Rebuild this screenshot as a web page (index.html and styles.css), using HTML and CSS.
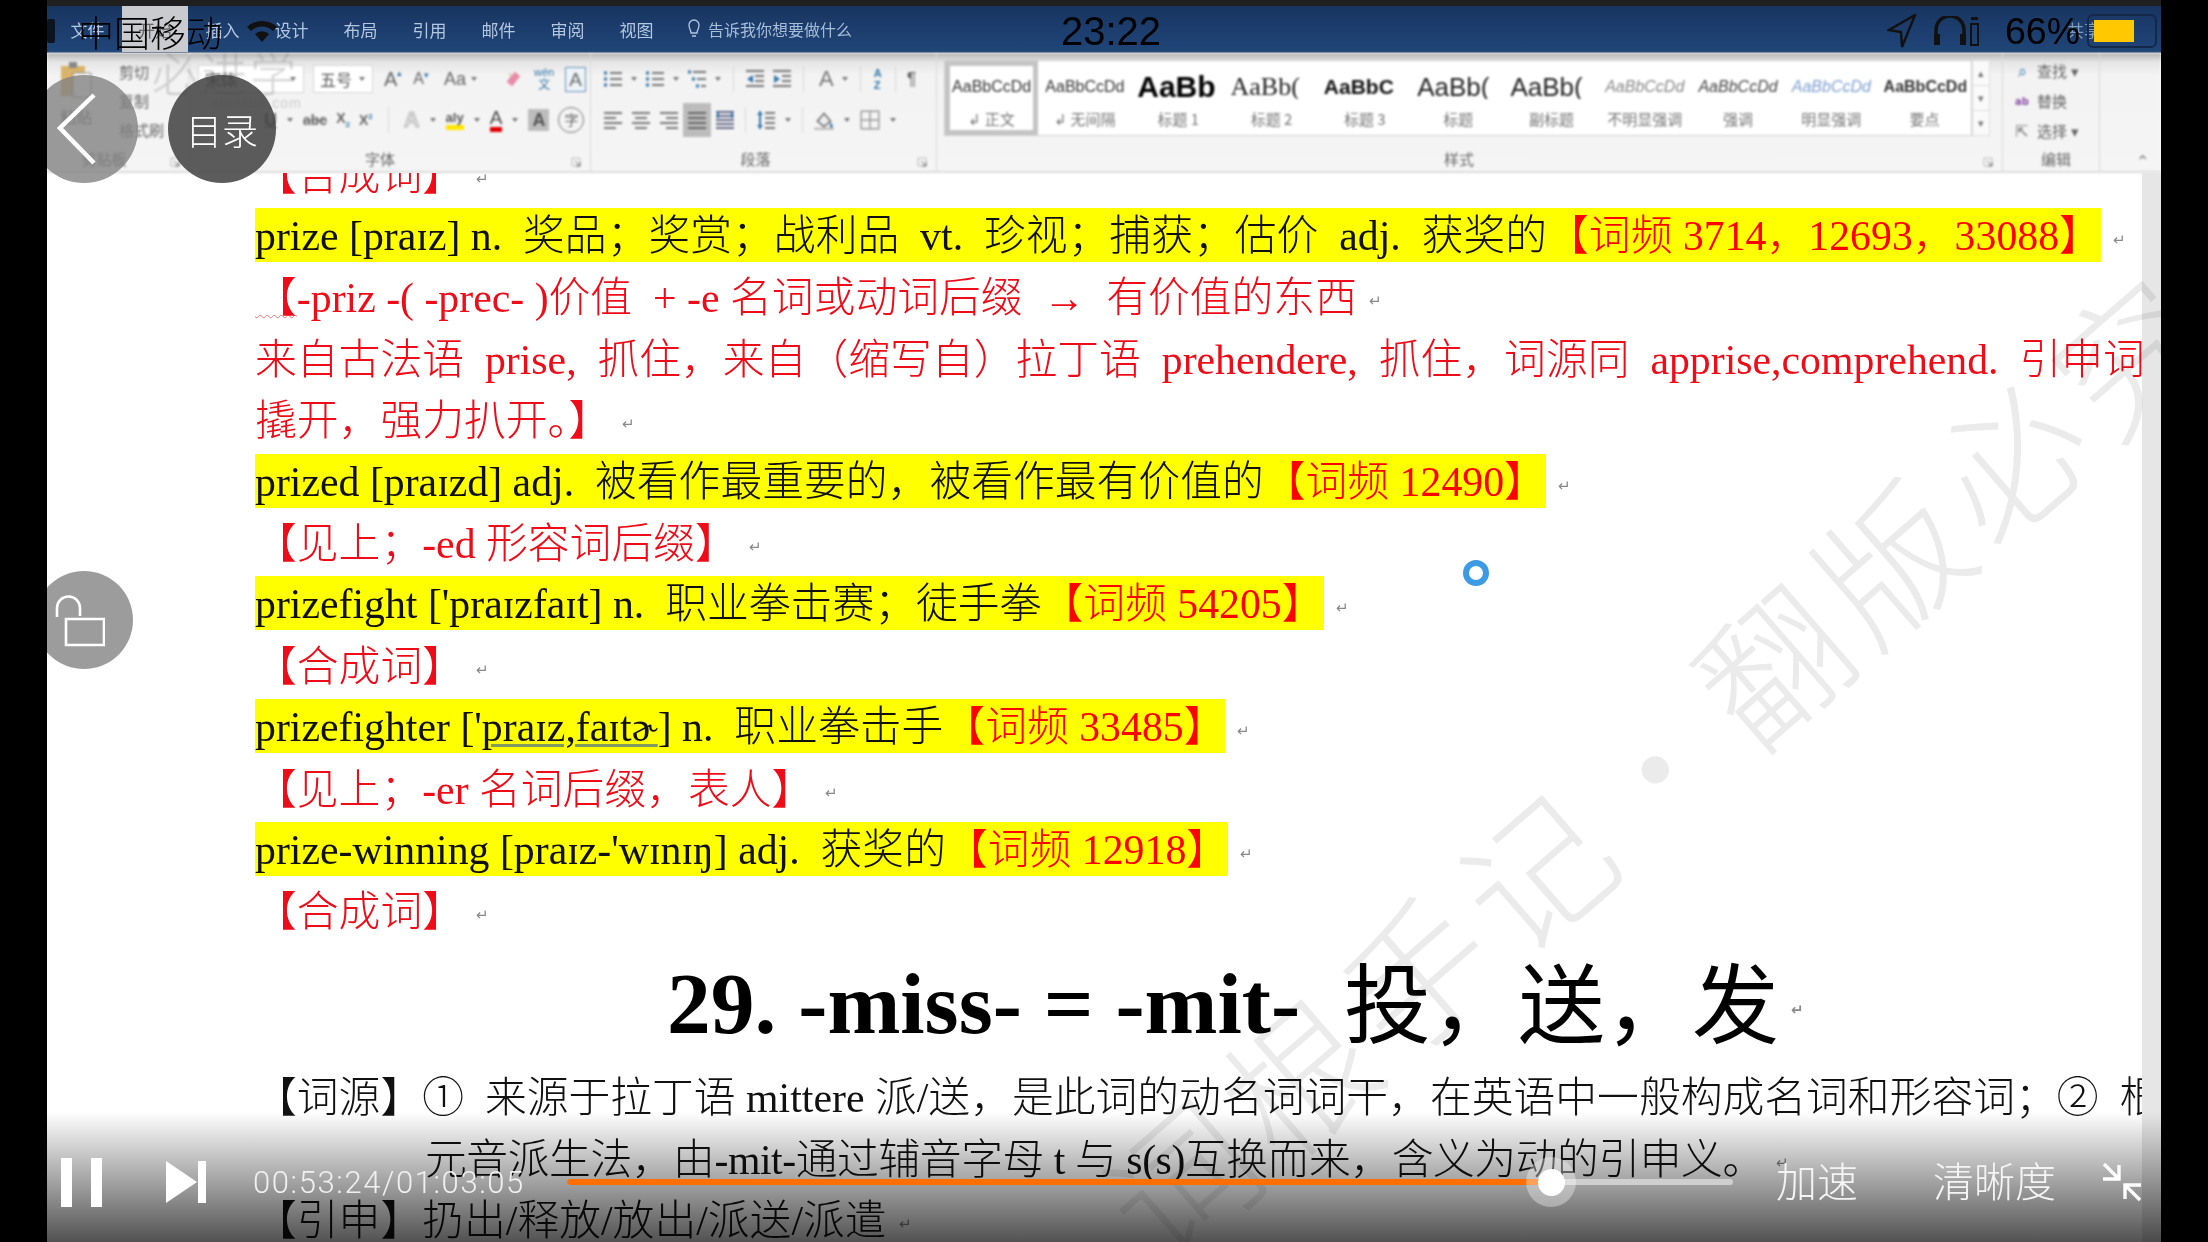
FILE: index.html
```html
<!DOCTYPE html>
<html lang="zh-CN">
<head>
<meta charset="utf-8">
<title>词根手记</title>
<link rel="stylesheet" href="styles.css">
</head>
<body>
<svg class="defs" width="0" height="0" aria-hidden="true">
  <symbol id="left" viewBox="0 0 20 20"><path d="M1 3h18M1 8h12M1 13h18M1 18h12" stroke="#777" stroke-width="2" fill="none"/></symbol>
  <symbol id="center" viewBox="0 0 20 20"><path d="M1 3h18M4 8h12M1 13h18M4 18h12" stroke="#777" stroke-width="2" fill="none"/></symbol>
  <symbol id="right" viewBox="0 0 20 20"><path d="M1 3h18M7 8h12M1 13h18M7 18h12" stroke="#777" stroke-width="2" fill="none"/></symbol>
  <symbol id="just" viewBox="0 0 20 20"><path d="M1 3h18M1 8h18M1 13h18M1 18h18" stroke="#666" stroke-width="2" fill="none"/></symbol>
  <symbol id="dist" viewBox="0 0 20 20"><path d="M1 2h18M1 6h18M1 10h18M1 14h18M1 18h18" stroke="#668" stroke-width="2" fill="none"/><path d="M3 2v6M17 2v6" stroke="#37a" stroke-width="2"/></symbol>
  <symbol id="bullet" viewBox="0 0 20 20"><path d="M7 4h12M7 10h12M7 16h12" stroke="#777" stroke-width="2" fill="none"/><path d="M1 4h3M1 10h3M1 16h3" stroke="#37a" stroke-width="3"/></symbol>
  <symbol id="multi" viewBox="0 0 20 20"><path d="M6 3h13M10 10h9M14 17h5" stroke="#777" stroke-width="2" fill="none"/><path d="M1 3h3M5 10h3M9 17h3" stroke="#37a" stroke-width="3"/></symbol>
  <symbol id="outdent" viewBox="0 0 20 20"><path d="M1 2h18M10 7h9M10 12h9M1 17h18" stroke="#777" stroke-width="2" fill="none"/><path d="M8 6v8L2 10z" fill="#37a"/></symbol>
  <symbol id="indent" viewBox="0 0 20 20"><path d="M1 2h18M10 7h9M10 12h9M1 17h18" stroke="#777" stroke-width="2" fill="none"/><path d="M2 6v8l6-4z" fill="#37a"/></symbol>
  <symbol id="spacing" viewBox="0 0 20 20"><path d="M9 3h10M9 8h10M9 13h10M9 18h10" stroke="#777" stroke-width="2" fill="none"/><path d="M4 1v18" stroke="#37a" stroke-width="2"/><path d="M1 5l3-4 3 4zM1 15l3 4 3-4z" fill="#37a"/></symbol>
  <symbol id="fill" viewBox="0 0 20 20"><path d="M4 11l6-7 6 7-6 5z" fill="#eee" stroke="#777" stroke-width="1.5"/><path d="M16 12c2 3 3 4 1 5s-2-3-1-5z" fill="#37a"/><path d="M1 18h18" stroke="#bbb" stroke-width="2"/></symbol>
  <symbol id="border" viewBox="0 0 20 20"><path d="M2 2h16v16H2zM10 2v16M2 10h16" stroke="#999" stroke-width="1.3" fill="none"/></symbol>
  <symbol id="caret" viewBox="0 0 8 6"><path d="M1 1h6L4 5z" fill="#777"/></symbol>
  <symbol id="launch" viewBox="0 0 10 10"><path d="M1 1h8v8H1z" fill="none" stroke="#bbb"/><path d="M4 4l5 5M5 9h4V5" fill="none" stroke="#777"/></symbol>
</svg>

<div class="screen">
  <main class="app">
    <div class="topband"></div>
    <header class="titlebar">
      <span class="tab">文件</span>
      <span class="tab tab-active">开始</span>
      <span class="tab">插入</span>
      <span class="tab">设计</span>
      <span class="tab">布局</span>
      <span class="tab">引用</span>
      <span class="tab">邮件</span>
      <span class="tab">审阅</span>
      <span class="tab">视图</span>
      <span class="tell">
        <svg width="12" height="20" viewBox="0 0 12 20"><path d="M3 14c0-3-2-4-2-8a5 5 0 0 1 10 0c0 4-2 5-2 8zM4 17h4" stroke="#b5c8e0" stroke-width="1.3" fill="none"/></svg>
        告诉我你想要做什么
      </span>
      <span class="share">共享</span>
    </header>

    <section class="ribbon">
      <div class="group g-clip">
        <div class="clip-body">
          <div class="paste">
            <svg width="34" height="38" viewBox="0 0 34 38"><path d="M2 5h24v30H2z" fill="#d9b36a"/><path d="M10 1h8v6h-8z" fill="#888"/><path d="M14 12h18v24H14z" fill="#fafafa" stroke="#888"/></svg>
            <span>粘贴</span>
          </div>
          <div class="clip-list"><span>剪切</span><span>复制</span><span>格式刷</span></div>
        </div>
        <div class="glabel"><span class="gname">剪贴板</span><svg class="launch"><use href="#launch"/></svg></div>
      </div>

      <div class="group g-font">
        <div class="tools">
          <div class="trow">
            <span class="combo combo-name">宋体<svg class="caret"><use href="#caret"/></svg></span>
            <span class="combo combo-size">五号<svg class="caret"><use href="#caret"/></svg></span>
            <span class="tb">A<sup>▴</sup></span>
            <span class="tb small">A<sup>▾</sup></span>
            <span class="tb tb-wide">Aa<svg class="caret"><use href="#caret"/></svg></span>
            <svg class="ic" width="20" height="22" viewBox="0 0 20 22"><path d="M3 14l9-11 6 5-9 11z" fill="#e88aa8"/><path d="M6 4l2 6" stroke="#ca7"/></svg>
            <span class="tb wen">wén<br><b>文</b></span>
            <span class="tb boxed">A</span>
          </div>
          <div class="trow trow2">
            <span class="tb u">U</span><svg class="caret"><use href="#caret"/></svg>
            <span class="tb abc">abc</span>
            <span class="tb sm">X<sub>2</sub></span>
            <span class="tb sm">X<sup>2</sup></span>
            <span class="sep sep-wide"></span>
            <span class="tb effect">A</span><svg class="caret"><use href="#caret"/></svg>
            <span class="tb marker">aly</span><svg class="caret"><use href="#caret"/></svg>
            <span class="tb redA">A</span><svg class="caret"><use href="#caret"/></svg>
            <span class="tb greyA">A</span>
            <span class="tb circ">字</span>
          </div>
        </div>
        <div class="glabel"><span class="gname">字体</span><svg class="launch"><use href="#launch"/></svg></div>
      </div>

      <div class="group g-para">
        <div class="tools">
          <div class="trow para-top">
            <svg class="ic"><use href="#bullet"/></svg><svg class="caret"><use href="#caret"/></svg>
            <svg class="ic"><use href="#bullet"/></svg><svg class="caret"><use href="#caret"/></svg>
            <svg class="ic"><use href="#multi"/></svg><svg class="caret"><use href="#caret"/></svg>
            <span class="sep"></span>
            <svg class="ic"><use href="#outdent"/></svg>
            <svg class="ic"><use href="#indent"/></svg>
            <span class="sep"></span>
            <span class="tb sortA">A</span><svg class="caret"><use href="#caret"/></svg>
            <span class="sep"></span>
            <span class="tb az">A<br>Z</span>
            <span class="sep"></span>
            <span class="tb pil">¶</span>
          </div>
          <div class="trow trow2">
            <svg class="ic"><use href="#left"/></svg>
            <svg class="ic"><use href="#center"/></svg>
            <svg class="ic"><use href="#right"/></svg>
            <span class="on"><svg class="ic"><use href="#just"/></svg></span>
            <svg class="ic"><use href="#dist"/></svg>
            <span class="sep"></span>
            <svg class="ic"><use href="#spacing"/></svg><svg class="caret"><use href="#caret"/></svg>
            <span class="sep"></span>
            <svg class="ic ic-l"><use href="#fill"/></svg><svg class="caret"><use href="#caret"/></svg>
            <svg class="ic ic-l"><use href="#border"/></svg><svg class="caret"><use href="#caret"/></svg>
          </div>
        </div>
        <div class="glabel"><span class="gname">段落</span><svg class="launch"><use href="#launch"/></svg></div>
      </div>

      <div class="group g-styles">
        <div class="gallery-wrap">
          <div class="gallery">
            <div class="style selected"><span class="s-prev">AaBbCcDd</span><span class="s-name">↲ 正文</span></div>
            <div class="style"><span class="s-prev">AaBbCcDd</span><span class="s-name">↲ 无间隔</span></div>
            <div class="style"><span class="s-prev h1">AaBb</span><span class="s-name">标题 1</span></div>
            <div class="style"><span class="s-prev h2">AaBb(</span><span class="s-name">标题 2</span></div>
            <div class="style"><span class="s-prev h3">AaBbC</span><span class="s-name">标题 3</span></div>
            <div class="style"><span class="s-prev h4">AaBb(</span><span class="s-name">标题</span></div>
            <div class="style"><span class="s-prev h4">AaBb(</span><span class="s-name">副标题</span></div>
            <div class="style"><span class="s-prev em1">AaBbCcDd</span><span class="s-name">不明显强调</span></div>
            <div class="style"><span class="s-prev em2">AaBbCcDd</span><span class="s-name">强调</span></div>
            <div class="style"><span class="s-prev em3">AaBbCcDd</span><span class="s-name">明显强调</span></div>
            <div class="style"><span class="s-prev st">AaBbCcDd</span><span class="s-name">要点</span></div>
          </div>
          <div class="gscroll"><span>▴</span><span>▾</span><span>▾</span></div>
        </div>
        <div class="glabel"><span class="gname">样式</span><svg class="launch"><use href="#launch"/></svg></div>
      </div>

      <div class="group g-edit">
        <div class="edit-list">
          <span><i class="e-find">⌕</i>查找 ▾</span>
          <span><i class="e-rep">ab</i>替换</span>
          <span><i class="e-sel">⇱</i>选择 ▾</span>
        </div>
        <div class="glabel"><span class="gname">编辑</span></div>
      </div>
      <div class="collapse">⌃</div>
    </section>

    <section class="docarea">
      <div class="page">
        <div class="lines">
          <div class="row red">【合成词】<i class="m">↵</i></div>
          <div class="row"><span class="hl">prize [praɪz] n. &nbsp;奖品；奖赏；战利品 &nbsp;vt. &nbsp;珍视；捕获；估价 &nbsp;adj. &nbsp;获奖的<b class="fq">【词频 3714，12693，33088】</b></span><i class="m">↵</i></div>
          <div class="row red"><u class="wavy">【</u>-priz -( -prec- )价值 &nbsp;+ -e 名词或动词后缀 &nbsp;→ &nbsp;有价值的东西<i class="m">↵</i></div>
          <div class="row red">来自古法语 &nbsp;prise, &nbsp;抓住，来自（缩写自）拉丁语 &nbsp;prehendere, &nbsp;抓住，词源同 &nbsp;apprise,comprehend. &nbsp;引申词</div>
          <div class="row red">撬开，强力扒开。】<i class="m">↵</i></div>
          <div class="row"><span class="hl">prized [praɪzd] adj. &nbsp;被看作最重要的，被看作最有价值的<b class="fq">【词频 12490】</b></span><i class="m">↵</i></div>
          <div class="row red">【见上；-ed 形容词后缀】<i class="m">↵</i></div>
          <div class="row"><span class="hl">prizefight ['praɪzfaɪt] n. &nbsp;职业拳击赛；徒手拳<b class="fq">【词频 54205】</b></span><i class="m">↵</i></div>
          <div class="row red">【合成词】<i class="m">↵</i></div>
          <div class="row"><span class="hl">prizefighter ['<u class="gram">praɪz,faɪtɚ</u>] n. &nbsp;职业拳击手<b class="fq">【词频 33485】</b></span><i class="m">↵</i></div>
          <div class="row red">【见上；-er 名词后缀，表人】<i class="m">↵</i></div>
          <div class="row"><span class="hl">prize-winning [praɪz-'wɪnɪŋ] adj. &nbsp;获奖的<b class="fq">【词频 12918】</b></span><i class="m">↵</i></div>
          <div class="row red">【合成词】<i class="m">↵</i></div>
          <h1 class="heading"><b>29. -miss- = -mit-</b><span class="h-cjk">投，送，发</span><i class="m">↵</i></h1>
          <div class="row">【词源】① &nbsp;来源于拉丁语 mittere 派/送，是此词的动名词词干，在英语中一般构成名词和形容词；② &nbsp;根</div>
          <div class="row row-indent">元音派生法，由-mit-通过辅音字母 t 与 s(s)互换而来，含义为动的引申义。<i class="m">↵</i></div>
          <div class="row">【引申】扔出/释放/放出/派送/派遣<i class="m">↵</i></div>
        </div>
      </div>
      <div class="scrollbar"></div>
      <div class="watermark">词根手记•翻版必究</div>
      <div class="spinner"></div>
    </section>

    <div class="status">
      <div class="st-left">
        <span class="signal"></span>
        <span class="carrier">中国移动</span>
        <svg class="wifi" width="32" height="24" viewBox="0 0 32 24"><path d="M1 8a22 22 0 0 1 30 0l-4 4a16 16 0 0 0-22 0z" fill="#111"/><path d="M9 15a10 10 0 0 1 14 0l-7 8z" fill="#111"/></svg>
      </div>
      <div class="clock">23:22</div>
      <div class="st-right">
        <svg width="30" height="34" viewBox="0 0 30 34"><path d="M28 1L15 33l-1-15L2 16z" fill="none" stroke="#111" stroke-width="2.4"/></svg>
        <svg class="phones" width="46" height="30" viewBox="0 0 46 30"><path d="M3 28V14a14 14 0 0 1 28 0v14" fill="none" stroke="#111" stroke-width="3.5"/><path d="M1 18h6v11H1zM27 18h6v11h-6z" fill="#111"/><path d="M38 8h7v21h-7z" fill="none" stroke="#111" stroke-width="2"/><path d="M38 1h7v3h-7z" fill="#111"/></svg>
        <span class="pct">66%</span>
        <span class="battery"><span class="level"></span></span>
      </div>
    </div>

    <div class="logo-mark">必进学<small>shuixue.com</small></div>

    <button class="round back" aria-label="返回"><svg width="40" height="72" viewBox="0 0 40 72"><path d="M37 2L3 35l34 35" fill="none" stroke="#fff" stroke-width="4.5"/></svg></button>
    <button class="round toc">目录</button>
    <button class="round lock" aria-label="锁定"><svg width="50" height="54" viewBox="0 0 50 54"><path d="M11 26h38v26H11z" fill="none" stroke="#fff" stroke-width="2.6"/><path d="M2 24V15a11 11 0 0 1 23 0v8" fill="none" stroke="#fff" stroke-width="2.6"/></svg></button>

    <footer class="controls">
      <div class="ctl-row">
        <span class="pause"><i></i><i></i></span>
        <svg class="next" width="40" height="42" viewBox="0 0 40 42"><path d="M0 0l31 21L0 42z" fill="#fff"/><path d="M32 0h8v42h-8z" fill="#fff"/></svg>
        <span class="time">00:53:24/01:03:05</span>
        <div class="track">
          <div class="fill" style="width:84.4%"></div>
          <div class="knob" style="left:84.4%"><span></span></div>
        </div>
        <span class="ctl-text speed">加速</span>
        <span class="ctl-text hd">清晰度</span>
        <svg class="shrink" width="42" height="40" viewBox="0 0 42 40"><path d="M3 2l15 15M18 3v14H2M39 38L24 23M24 37V23h16" fill="none" stroke="#fff" stroke-width="3.4"/></svg>
      </div>
    </footer>
  </main>
</div>
</body>
</html>
```

FILE: styles.css
```css
* { box-sizing: border-box; }
html, body { margin: 0; height: 100%; background: #000; overflow: hidden; }
.defs { position: absolute; }
.screen { width: 2208px; height: 1242px; padding: 0 47px; background: #000; }
.app {
  position: relative; width: 2114px; height: 1242px; overflow: hidden;
  display: flex; flex-direction: column; background: #fff;
  font-family: "Liberation Sans", "Noto Sans CJK SC", sans-serif;
}
.topband { height: 6px; background: #1f1f1f; flex: none; }

/* Word title bar */
.titlebar {
  flex: none; height: 47px; display: flex; align-items: center; padding-left: 6px;
  background: linear-gradient(#183560, #1d3f70 60%, #1f4577);
  color: #b3c7e0; font-size: 17px; filter: blur(.7px);
  border-bottom: 1px solid #5c7598;
}
.tab { width: 69px; height: 100%; display: flex; align-items: center; justify-content: center; }
.tab-active { width: 66px; background: #c9cbce; color: #666; }
.tell { margin-left: 17px; display: flex; align-items: center; gap: 8px; font-size: 16px; color: #a6bdd9; }
.share { margin-left: auto; margin-right: 60px; color: #7f9abb; font-size: 17px; }

/* Ribbon */
.ribbon {
  flex: none; height: 120px; display: flex; color: #666; font-size: 15px;
  background: linear-gradient(#b4b4b4, #e6e6e6 9px, #f3f3f3 22px, #f5f5f5);
  border-bottom: 2px solid #dcdcdc; filter: blur(.8px);
}
.group { display: flex; flex-direction: column; height: 100%; border-right: 1px solid #d8d8d8; padding-top: 12px; }
.glabel { margin-top: auto; height: 22px; display: flex; font-size: 15px; color: #666; line-height: 22px; }
.gname { flex: 1; text-align: center; }
.launch { width: 28px; height: 10px; margin-top: 8px; flex: none; }
.g-clip { width: 143px; padding-top: 8px; }
.g-font { width: 401px; padding-left: 8px; }
.g-para { width: 346px; padding-left: 12px; }
.g-styles { width: 1066px; padding: 7px 0 0 7px; }
.g-edit { width: 97px; padding: 8px 0 0 10px; }
.clip-body { display: flex; gap: 14px; padding-left: 12px; }
.paste { display: flex; flex-direction: column; align-items: center; gap: 5px; font-size: 16px; }
.clip-list { display: flex; flex-direction: column; gap: 8px; font-size: 15px; margin-left: 12px; }
.tools { display: flex; flex-direction: column; gap: 12px; }
.trow { display: flex; align-items: center; height: 28px; gap: 9px; white-space: nowrap; }
.trow2 { height: 30px; }
.g-font .trow2 { padding-left: 66px; }
.g-para .trow { gap: 7px; }
.g-para .trow2 { gap: 8px; }
.para-top .sep { margin: 0 4px; }
.caret { width: 8px; height: 6px; flex: none; }
.combo { display: flex; align-items: center; justify-content: space-between; height: 28px; background: #fff; border: 1px solid #d6d6d6; padding: 0 6px; font-size: 16px; color: #555; }
.combo-name { width: 106px; }
.combo-size { width: 60px; margin-right: 2px; }
.tb { font-size: 20px; color: #666; line-height: 1; display: inline-block; font-family: "Liberation Sans", sans-serif; }
.tb sup { font-size: 9px; color: #37a; vertical-align: top; }
.tb.small { font-size: 16px; margin-left: 2px; }
.tb-wide { display: flex; align-items: center; gap: 4px; font-size: 18px; margin: 0 16px 0 6px; }
.wen { font-size: 11px; text-align: center; color: #37a; margin: 0 2px; }
.wen b { font-size: 12px; font-weight: 400; font-family: "Noto Sans CJK SC", sans-serif; }
.boxed { border: 1.5px solid #6a92bd; padding: 2px 3px; font-size: 19px; background: #eef3f8; }
.u { text-decoration: underline; font-weight: 700; font-size: 18px; }
.abc { font-size: 14px; font-weight: 700; text-decoration: line-through; }
.sm { font-size: 14px; font-weight: 700; }
.sm sub, .sm sup { font-size: 8px; color: #37a; }
.sep { width: 1px; height: 26px; background: #d8d8d8; margin: 0 2px; }
.sep-wide { margin: 0 6px; }
.effect { color: #ddd; font-size: 22px; font-weight: 700; -webkit-text-stroke: 1px #bbb; }
.marker { font-size: 13px; color: #555; border-bottom: 5px solid #ffe600; font-weight: 700; padding-bottom: 1px; }
.redA { font-size: 19px; color: #444; border-bottom: 5px solid #e00000; line-height: 19px; }
.greyA { background: #bdbdbd; color: #555; font-weight: 700; padding: 2px 4px; font-size: 18px; }
.circ { width: 26px; height: 26px; border: 1.5px solid #777; border-radius: 50%; text-align: center; font: 14px/23px "Noto Sans CJK SC", sans-serif; }
.ic { width: 20px; height: 20px; flex: none; }
.ic-l { width: 22px; height: 22px; }
.on { background: #bcbcbc; height: 34px; width: 28px; display: flex; align-items: center; justify-content: center; margin: 0 -4px; }
.sortA { font-size: 22px; color: #777; margin-left: 4px; }
.az { font-size: 11px; color: #37a; line-height: 12px; font-weight: 700; margin: 0 2px; }
.pil { font-size: 18px; }
.gallery-wrap { display: flex; height: 76px; }
.gallery { display: flex; width: 1028px; background: #fff; border: 1px solid #d0d0d0; height: 76px; overflow: hidden; }
.style { width: 93.3px; flex: none; display: flex; flex-direction: column; align-items: center; overflow: hidden; padding-top: 14px; }
.style.selected { border: 5px solid #c4c4c4; padding-top: 9px; }
.s-prev { height: 24px; line-height: 24px; font-size: 16px; color: #333; white-space: nowrap; width: 82px; overflow: hidden; text-align: center; font-family: "Liberation Sans", sans-serif; }
.s-name { font-size: 15px; color: #777; margin-top: 10px; line-height: 20px; font-family: "Noto Sans CJK SC", sans-serif; white-space: nowrap; }
.h1 { font-size: 30px; font-weight: 700; color: #000; text-align: left; }
.h2 { font-size: 26px; font-family: "Liberation Serif", serif; color: #222; text-align: left; }
.h3 { font-size: 21px; font-weight: 700; color: #111; text-align: left; }
.h4 { font-size: 26px; color: #222; font-weight: 400; text-align: left; }
.em1 { font-style: italic; color: #888; }
.em2 { font-style: italic; color: #444; }
.em3 { font-style: italic; color: #7d9fd0; }
.st { font-weight: 700; color: #333; }
.gscroll { width: 18px; display: flex; flex-direction: column; font-size: 11px; color: #777; text-align: center; background: #fafafa; border: 1px solid #ddd; }
.gscroll span { flex: 1; line-height: 24px; border-bottom: 1px solid #ddd; }
.edit-list { display: flex; flex-direction: column; gap: 8px; font-size: 15px; color: #666; line-height: 22px; }
.edit-list span { display: flex; align-items: center; gap: 6px; white-space: nowrap; }
.edit-list i { width: 18px; font-style: normal; text-align: center; font-size: 16px; color: #37a; font-family: "DejaVu Sans", sans-serif; }
.e-rep { font-size: 10px !important; color: #8a4fa8 !important; font-weight: 700; }
.e-sel { color: #777 !important; }
.collapse { align-self: flex-end; padding: 0 0 0 36px; font-size: 16px; color: #777; font-family: "DejaVu Sans", sans-serif; }

/* Document */
.docarea { position: relative; flex: 1; display: flex; min-height: 0; overflow: hidden; }
.page { flex: 1; min-width: 0; overflow: hidden; filter: blur(.55px); position: relative; z-index: 1; }
.scrollbar { width: 19px; flex: none; background: #e6e6e6; position: relative; z-index: 1; }
.lines { margin-top: -30px; font-family: "Liberation Serif", "Noto Sans CJK SC", serif; font-size: 41.8px; color: #111; }
.row { height: 61.4px; display: flex; align-items: center; padding: 0 0 4px 208px; white-space: pre; font-weight: 300; }
.row-indent { padding-left: 378px; letter-spacing: -.45px; }
.red { color: #ee0c18; }
.hl { display: block; background: #ff0; height: 54px; line-height: 56px; margin-bottom: -4px; }
.fq { font-weight: 300; color: #f00; }
.m { font-size: 15px; font-style: normal; color: #888; margin: 14px 0 0 12px; font-family: "DejaVu Sans", sans-serif; }
.wavy { text-decoration: underline wavy #d77; text-decoration-thickness: 1px; text-underline-offset: 2px; }
.gram { text-decoration: underline #7f9b5e 3px; text-underline-offset: 3px; }
.heading { margin: 0; height: 124.6px; display: flex; align-items: center; padding-left: 620px; font-size: 87.5px; color: #000; font-weight: 700; white-space: pre; }
.h-cjk { font-weight: 400; margin: -8px 0 0 44px; font-size: 87px; }
.watermark {
  position: absolute; left: 903px; top: 519px; width: 1400px; text-align: center;
  transform: rotate(-41deg); font: 200 145px/1 "Noto Sans CJK SC", sans-serif; letter-spacing: 12px;
  color: #ebebeb; white-space: nowrap; z-index: 2; mix-blend-mode: multiply; pointer-events: none;
}
.spinner { position: absolute; left: 1416px; top: 387px; width: 26px; height: 26px; border: 6px solid #3c9be2; border-radius: 50%; z-index: 3; }

/* Phone status bar */
.status {
  position: absolute; left: 0; right: 0; top: 8px; height: 46px; z-index: 5;
  display: grid; grid-template-columns: 1014px auto 1fr; align-items: center; color: #000;
}
.st-left { display: flex; align-items: center; }
.signal { width: 8px; height: 24px; background: #0c1420; border-radius: 2px; margin-right: 23px; }
.carrier { font: 36px/46px "Noto Sans CJK SC", sans-serif; font-weight: 300; }
.wifi { margin-left: 24px; }
.clock { font-size: 40px; line-height: 46px; }
.st-right { display: flex; align-items: center; justify-content: flex-end; gap: 0; padding-right: 4px; }
.phones { margin-left: 16px; margin-right: 26px; }
.pct { font-size: 37.5px; line-height: 46px; margin-right: 7px; }
.battery { width: 70px; height: 34px; border: 2px solid #14294a; border-radius: 6px; padding: 4px 5px; display: block; }
.level { display: block; width: 40px; height: 22px; background: #ffc800; }

.logo-mark {
  position: absolute; left: 105px; top: 46px; z-index: 4; font: 300 46px/50px "Noto Sans CJK SC", sans-serif;
  color: rgba(120, 120, 120, .32); letter-spacing: 3px; filter: blur(1px);
}
.logo-mark small { display: block; font: 14px/14px "Liberation Sans", sans-serif; letter-spacing: 1px; margin-left: 60px; }

/* Round overlay buttons */
.round { position: absolute; border: 0; padding: 0; border-radius: 50%; display: flex; align-items: center; justify-content: center; color: #fff; z-index: 6; }
.back { left: -17px; top: 75px; width: 108px; height: 108px; background: rgba(130, 130, 130, .8); padding-right: 14px; }
.toc { left: 121px; top: 75px; width: 108px; height: 108px; background: rgba(70, 70, 70, .88); font: 300 36px "Noto Sans CJK SC", sans-serif; }
.lock { left: -12px; top: 571px; width: 98px; height: 98px; background: #9c9c9c; padding-right: 8px; }

/* Video controls */
.controls {
  position: absolute; left: 0; right: 0; bottom: 0; height: 130px; z-index: 7; padding-top: 40px;
  background: linear-gradient(rgba(0,0,0,0), rgba(0,0,0,.68));
}
.ctl-row { height: 60px; display: flex; align-items: center; color: #fff; }
.pause { display: flex; gap: 19px; margin-left: 14px; }
.pause i { width: 11px; height: 49px; background: #fff; display: block; }
.next { margin-left: 64px; }
.time { margin-left: 47px; width: 270px; flex: none; font: 300 31px/1 Roboto, "Liberation Sans", sans-serif; letter-spacing: 1.6px; white-space: nowrap; color: #f0f0f0; }
.track { position: relative; margin-left: 44px; width: 1166px; height: 6px; background: #cfcfcf; border-radius: 3px; flex: none; }
.fill { height: 6px; background: #ff6e00; border-radius: 3px; }
.knob { position: absolute; top: -22px; width: 50px; height: 50px; margin-left: -25px; border-radius: 50%; background: rgba(255,255,255,.35); display: flex; align-items: center; justify-content: center; }
.knob span { width: 27px; height: 27px; border-radius: 50%; background: #fff; }
.ctl-text { font: 300 41px/1 "Noto Sans CJK SC", sans-serif; color: #f4f4f4; white-space: nowrap; margin-top: -6px; }
.speed { margin-left: 43px; }
.hd { margin-left: 75px; }
.shrink { margin-left: 45px; }
```
